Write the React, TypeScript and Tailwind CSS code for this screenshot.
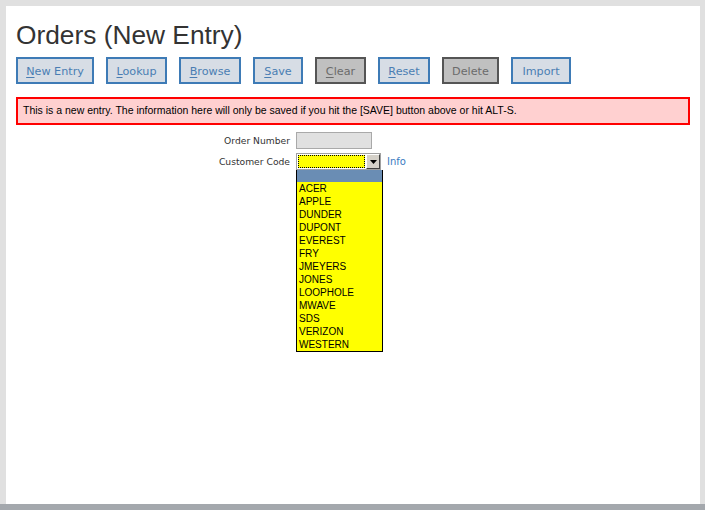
import React from "react";

const buttons: { label: string; key: string; rest: string; w: number; disabled?: boolean; noKey?: boolean }[] = [
  { label: "New Entry", key: "N", rest: "ew Entry", w: 78 },
  { label: "Lookup", key: "L", rest: "ookup", w: 61 },
  { label: "Browse", key: "B", rest: "rowse", w: 62 },
  { label: "Save", key: "S", rest: "ave", w: 50 },
  { label: "Clear", key: "C", rest: "lear", w: 51, disabled: true },
  { label: "Reset", key: "R", rest: "eset", w: 52 },
  { label: "Delete", key: "", rest: "Delete", w: 57, disabled: true, noKey: true },
  { label: "Import", key: "", rest: "Import", w: 60, noKey: true },
];

const customers = [
  "ACER",
  "APPLE",
  "DUNDER",
  "DUPONT",
  "EVEREST",
  "FRY",
  "JMEYERS",
  "JONES",
  "LOOPHOLE",
  "MWAVE",
  "SDS",
  "VERIZON",
  "WESTERN",
];

export default function App() {
  return (
    <div className="w-[705px] h-[510px] bg-[#e0e0e0] flex flex-col overflow-hidden">
      <div className="flex-1 flex pt-[6px] pl-[6px] pr-[5px]">
        <div className="flex-1 bg-white pl-[10px] pr-[10px] relative">
          <h1
            className="text-[26.3px] leading-[30px] text-[#333333] pt-[14px] h-[51px]"
            style={{ fontFamily: '"Liberation Sans", Arial, sans-serif' }}
          >
            Orders (New Entry)
          </h1>
          <div className="flex gap-[12px]" style={{ fontFamily: '"DejaVu Sans", sans-serif' }}>
            {buttons.map((b) => (
              <div
                key={b.label}
                className={
                  "h-[27px] flex items-center justify-center border-2 text-[11.2px] pt-[3px] " +
                  (b.disabled
                    ? "border-[#555555] bg-[#c0c0c0] text-[#6b6b6b]"
                    : "border-[#3e7bb6] bg-[#d7dde5] text-[#4a7db3]")
                }
                style={{ width: b.w }}
              >
                {b.noKey ? (
                  <span>{b.rest}</span>
                ) : (
                  <span>
                    <span className="underline underline-offset-2">{b.key}</span>
                    {b.rest}
                  </span>
                )}
              </div>
            ))}
          </div>
          <div
            className="mt-[13px] h-[28px] border-2 border-[#ff0000] bg-[#ffd0d0] flex items-center pl-[5px] text-[10.5px] text-black"
            style={{ fontFamily: '"Liberation Sans", Arial, sans-serif' }}
          >
            This is a new entry. The information here will only be saved if you hit the [SAVE] button above or hit ALT-S.
          </div>
          <div
            className="mt-[7px] flex flex-col gap-[4px] text-[9.2px] text-[#333333]"
            style={{ fontFamily: '"DejaVu Sans", sans-serif' }}
          >
            <div className="flex items-center h-[17px]">
              <div className="w-[280px] text-right pr-[6px]">Order Number</div>
              <div className="w-[76px] h-[17px] bg-[#e0e0e0] border border-[#a9a9a9]" />
            </div>
            <div className="flex items-center h-[17px]">
              <div className="w-[280px] text-right pr-[6px]">Customer Code</div>
              <div className="relative">
                <div className="w-[85px] h-[17px] border border-[#a0a0a0] bg-white flex">
                  <div className="flex-1 bg-[#ffff00] m-[1px] border border-dotted border-black" />
                  <div className="w-[14px] bg-[#d4d0c8] border border-t-white border-l-white border-r-[#404040] border-b-[#404040] flex items-center justify-center">
                    <svg width="7" height="4" viewBox="0 0 7 4">
                      <polygon points="0,0 7,0 3.5,4" fill="#000" />
                    </svg>
                  </div>
                </div>
                <div
                  className="absolute left-0 top-[17px] w-[87px] bg-[#ffff00] border border-black border-t-0 flex flex-col text-[10px] text-black z-10"
                  style={{ fontFamily: '"Liberation Sans", Arial, sans-serif' }}
                >
                  <div className="h-[12px] bg-[#6a8db4]" />
                  {customers.map((c) => (
                    <div key={c} className="h-[13px] leading-[13px] pl-[2px]">
                      {c}
                    </div>
                  ))}
                </div>
              </div>
              <span className="ml-[6px] text-[10px] text-[#3a7bbf]">Info</span>
            </div>
          </div>
        </div>
      </div>
      <div className="h-[6px] bg-[#a4a8ad]" />
    </div>
  );
}
